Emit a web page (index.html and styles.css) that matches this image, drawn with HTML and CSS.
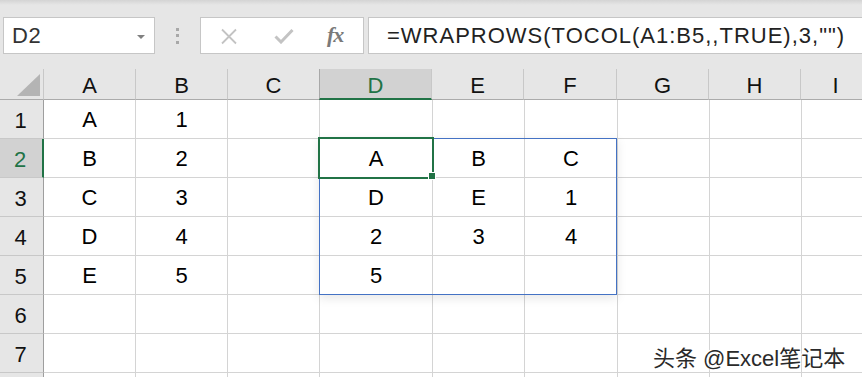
FILE: index.html
```html
<!DOCTYPE html>
<html>
<head>
<meta charset="utf-8">
<link rel="stylesheet" href="styles.css">
</head>
<body>
<div class="app">
  <div class="topband"></div>
  <div class="toolbar">
    <div class="namebox">
      <span class="name">D2</span>
      <span class="dd"></span>
    </div>
    <div class="grip"><i></i><i></i><i></i></div>
    <div class="fbtns">
      <svg class="ico-x" width="18" height="17" viewBox="0 0 18 17"><path d="M2 1.5 L16 15.5 M16 1.5 L2 15.5" stroke="#c3c3c3" stroke-width="1.8" fill="none"/></svg>
      <svg class="ico-ok" width="20" height="16" viewBox="0 0 20 16"><path d="M1.5 8.5 L7 14 L18.5 2" stroke="#c3c3c3" stroke-width="3" fill="none"/></svg>
      <span class="fx">fx</span>
    </div>
    <div class="formula">=WRAPROWS(TOCOL(A1:B5,,TRUE),3,"")</div>
  </div>

  <div class="sheet">
    <div class="row hdr">
      <div class="corner"><span class="tri"></span></div>
      <div class="ch w92">A</div>
      <div class="ch w92">B</div>
      <div class="ch w92">C</div>
      <div class="ch w113 sel">D</div>
      <div class="ch w92">E</div>
      <div class="ch w93">F</div>
      <div class="ch w92">G</div>
      <div class="ch w92">H</div>
      <div class="ch wrest">I</div>
    </div>
    <div class="row">
      <div class="rh">1</div>
      <div class="c w92">A</div><div class="c w92">1</div><div class="c w92"></div>
      <div class="c w113"></div><div class="c w92"></div><div class="c w93"></div>
      <div class="c w92"></div><div class="c w92"></div><div class="c wrest"></div>
    </div>
    <div class="row">
      <div class="rh sel">2</div>
      <div class="c w92">B</div><div class="c w92">2</div><div class="c w92"></div>
      <div class="c w113">A</div><div class="c w92">B</div><div class="c w93">C</div>
      <div class="c w92"></div><div class="c w92"></div><div class="c wrest"></div>
    </div>
    <div class="row">
      <div class="rh">3</div>
      <div class="c w92">C</div><div class="c w92">3</div><div class="c w92"></div>
      <div class="c w113">D</div><div class="c w92">E</div><div class="c w93">1</div>
      <div class="c w92"></div><div class="c w92"></div><div class="c wrest"></div>
    </div>
    <div class="row">
      <div class="rh">4</div>
      <div class="c w92">D</div><div class="c w92">4</div><div class="c w92"></div>
      <div class="c w113">2</div><div class="c w92">3</div><div class="c w93">4</div>
      <div class="c w92"></div><div class="c w92"></div><div class="c wrest"></div>
    </div>
    <div class="row">
      <div class="rh">5</div>
      <div class="c w92">E</div><div class="c w92">5</div><div class="c w92"></div>
      <div class="c w113">5</div><div class="c w92"></div><div class="c w93"></div>
      <div class="c w92"></div><div class="c w92"></div><div class="c wrest"></div>
    </div>
    <div class="row">
      <div class="rh">6</div>
      <div class="c w92"></div><div class="c w92"></div><div class="c w92"></div>
      <div class="c w113"></div><div class="c w92"></div><div class="c w93"></div>
      <div class="c w92"></div><div class="c w92"></div><div class="c wrest"></div>
    </div>
    <div class="row">
      <div class="rh">7</div>
      <div class="c w92"></div><div class="c w92"></div><div class="c w92"></div>
      <div class="c w113"></div><div class="c w92"></div><div class="c w93"></div>
      <div class="c w92"></div><div class="c w92"></div><div class="c wrest"></div>
    </div>
    <div class="row">
      <div class="rh"></div>
      <div class="c w92"></div><div class="c w92"></div><div class="c w92"></div>
      <div class="c w113"></div><div class="c w92"></div><div class="c w93"></div>
      <div class="c w92"></div><div class="c w92"></div><div class="c wrest"></div>
    </div>

    <div class="spill"></div>
    <div class="active"></div>
    <div class="handle"></div>
    <div class="watermark">头条 @Excel笔记本</div>
  </div>
</div>
</body>
</html>
```

FILE: styles.css
```css
* { box-sizing: border-box; }
html, body { margin: 0; padding: 0; }
body {
  width: 862px;
  height: 377px;
  overflow: hidden;
  background: #e6e6e6;
  font-family: "Liberation Sans", Arial, sans-serif;
}
.app { position: relative; width: 862px; height: 377px; overflow: hidden; }
.topband {
  height: 5px;
  background: linear-gradient(#d4d4d4, #e6e6e6);
}
.toolbar {
  display: flex;
  align-items: stretch;
  height: 37px;
  margin-top: 12px;
  padding-left: 3px;
}
.toolbar > * { flex: none; }
.namebox {
  width: 152px;
  background: #fff;
  border: 1px solid #c6c6c6;
  display: flex;
  align-items: center;
  justify-content: space-between;
  padding: 1px 9px 0 8px;
}
.name { font-size: 22px; color: #333; letter-spacing: 0.5px; }
.dd {
  width: 0; height: 0;
  border-left: 4px solid transparent;
  border-right: 4px solid transparent;
  border-top: 4px solid #808080;
  margin-top: 1px;
}
.grip {
  width: 45px;
  display: flex;
  flex-direction: column;
  align-items: center;
  justify-content: center;
  gap: 3.5px;
}
.grip i { display: block; width: 3px; height: 3px; background: #a8a8a8; }
.fbtns {
  width: 164px;
  background: #fff;
  border: 1px solid #c6c6c6;
  display: flex;
  align-items: center;
  padding-left: 19px;
}
.ico-x { margin-top: 1px; }
.ico-ok { margin-left: 36px; margin-top: 1px; }
.fx {
  margin-left: 33px;
  font-family: "Liberation Serif", "Times New Roman", serif;
  font-style: italic;
  font-weight: bold;
  font-size: 22px;
  color: #7a7a7a;
  letter-spacing: -1px;
  margin-top: -2px;
}
.formula {
  margin-left: 4px;
  width: 500px;
  background: #fff;
  border: 1px solid #c6c6c6;
  border-right: none;
  font-size: 22px;
  letter-spacing: 1px;
  color: #222;
  display: flex;
  align-items: center;
  padding-left: 18px;
  padding-top: 1px;
  white-space: nowrap;
}

.sheet {
  position: relative;
  margin-top: 15px;
  background: #fff;
}
.row { display: flex; height: 39px; }
.row.hdr { height: 31px; background: #e6e6e6; }
.corner {
  width: 44px;
  flex: none;
  border-right: 1px solid #c8c8c8;
  border-bottom: 1px solid #ababab;
  position: relative;
}
.tri {
  position: absolute;
  right: 3px;
  bottom: 3px;
  width: 0; height: 0;
  border-left: 23px solid transparent;
  border-bottom: 22px solid #b4b4b4;
}
.ch {
  flex: none;
  border-right: 1px solid #c8c8c8;
  border-bottom: 1px solid #ababab;
  display: flex;
  align-items: center;
  justify-content: center;
  font-size: 22px;
  color: #111;
  padding-top: 3px;
}
.ch.sel {
  background: #d2d2d2;
  color: #217346;
  border-left: 1px solid #a8a8a8;
  margin-left: -1px;
  border-bottom: 2px solid #217346;
  padding-top: 4px;
}
.w92 { width: 92px; }
.w93 { width: 93px; }
.w113 { width: 113px; }
.wrest { width: 70px; }
.rh {
  width: 44px;
  flex: none;
  background: #e6e6e6;
  border-right: 1px solid #9e9e9e;
  border-bottom: 1px solid #c8c8c8;
  display: flex;
  align-items: center;
  justify-content: center;
  font-size: 22px;
  color: #111;
  padding-top: 3px;
  padding-right: 2px;
}
.rh.sel {
  background: #d2d2d2;
  color: #217346;
  border-right: 2px solid #217346;
}
.c {
  flex: none;
  border-right: 1px solid #d4d4d4;
  border-bottom: 1px solid #d4d4d4;
  display: flex;
  align-items: center;
  justify-content: center;
  font-size: 22px;
  color: #000;
  padding-top: 2px;
}
.spill {
  position: absolute;
  left: 319px;
  top: 69px;
  width: 298px;
  height: 157px;
  border: 1px solid #4472c4;
  box-shadow: 0 3px 10px rgba(0, 0, 0, 0.10);
}
.active {
  position: absolute;
  left: 318px;
  top: 68px;
  width: 116px;
  height: 42px;
  border: 2px solid #217346;
}
.handle {
  position: absolute;
  left: 428px;
  top: 103px;
  width: 8px;
  height: 8px;
  background: #217346;
  border: 1px solid #fff;
}
.watermark {
  position: absolute;
  left: 653px;
  top: 271px;
  font-family: "Liberation Sans", "Noto Sans CJK SC", sans-serif;
  font-size: 22px;
  color: #2a2a2a;
  text-shadow: 0 0 2px #fff, 1px 1px 0 #fff, -1px -1px 0 #fff;
  white-space: nowrap;
}
```
